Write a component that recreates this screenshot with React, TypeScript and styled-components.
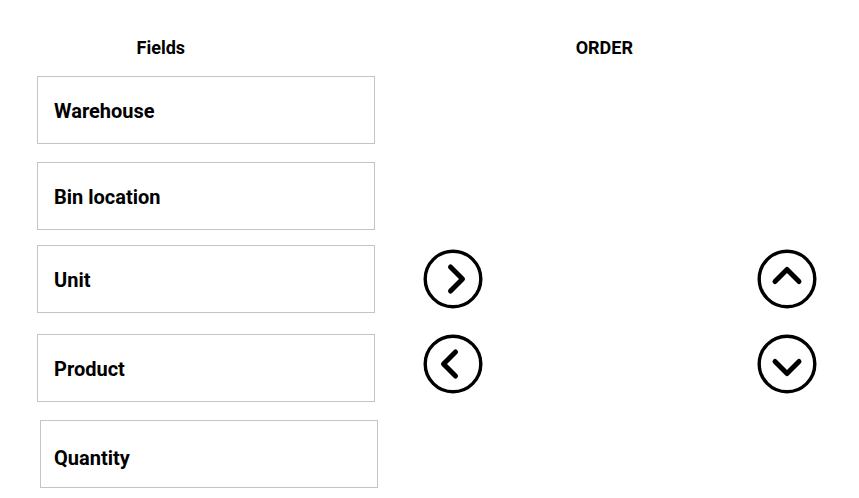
import { createGlobalStyle } from "styled-components";
import styled from "styled-components";

const GlobalStyle = createGlobalStyle`
  body {
    margin: 0;
    background: #fff;
    font-family: Roboto, "Liberation Sans", sans-serif;
    color: #000;
  }
`;

// gap above each box, horizontal nudge, and how far the label sits below centre
const fields = [
  { name: "Warehouse", gap: 0, shift: 0, drop: 1 },
  { name: "Bin location", gap: 18, shift: 0, drop: 1 },
  { name: "Unit", gap: 15, shift: 0, drop: 1 },
  { name: "Product", gap: 21, shift: 0, drop: 1 },
  { name: "Quantity", gap: 18, shift: 3, drop: 4 },
];

const CircleArrow = ({ dir }: { dir: "right" | "left" | "up" | "down" }) => {
  const rot = { right: 0, down: 90, left: 180, up: 270 }[dir];
  return (
    <svg width="60" height="60" viewBox="0 0 60 60">
      <circle cx="30" cy="30" r="27.8" fill="none" stroke="#000" strokeWidth="3.4" />
      <path
        d="M27.5 18 L39.5 30 L27.5 42"
        fill="none"
        stroke="#000"
        strokeWidth="5"
        strokeLinecap="round"
        strokeLinejoin="round"
        transform={`rotate(${rot} 30 30)`}
      />
    </svg>
  );
};

const App = () => {
  return (
    <Page>
      <GlobalStyle />
      <Header>
        <FieldsTitle>Fields</FieldsTitle>
        <OrderTitle>ORDER</OrderTitle>
      </Header>
      <Main>
        <FieldList>
          {fields.map((f) => (
            <FieldBox key={f.name} $gap={f.gap} $shift={f.shift} $drop={f.drop}>
              {f.name}
            </FieldBox>
          ))}
        </FieldList>
        <ArrowColumn $left={48}>
          <ArrowButton aria-label="Add">
            <CircleArrow dir="right" />
          </ArrowButton>
          <ArrowButton aria-label="Remove">
            <CircleArrow dir="left" />
          </ArrowButton>
        </ArrowColumn>
        <ArrowColumn $left={274}>
          <ArrowButton aria-label="Move up">
            <CircleArrow dir="up" />
          </ArrowButton>
          <ArrowButton aria-label="Move down">
            <CircleArrow dir="down" />
          </ArrowButton>
        </ArrowColumn>
      </Main>
    </Page>
  );
};
export default App;

const Page = styled.div`
  width: 859px;
  height: 498px;
  overflow: hidden;
`;
const Header = styled.div`
  display: flex;
  align-items: center;
  padding-top: 37px;
  height: 20px;
  font-size: 18px;
  font-weight: 700;
`;
const FieldsTitle = styled.div`
  width: 322px;
  text-align: center;
`;
const OrderTitle = styled.div`
  width: 510px;
  margin-left: 28px;
  text-align: center;
`;
const Main = styled.div`
  display: flex;
  align-items: flex-start;
  padding-top: 19px;
`;
const FieldList = styled.div`
  display: flex;
  flex-direction: column;
  align-items: flex-start;
  margin-left: 37px;
  width: 338px;
`;
const FieldBox = styled.div<{ $gap: number; $shift: number; $drop: number }>`
  box-sizing: border-box;
  width: 338px;
  height: 68px;
  flex-shrink: 0;
  margin-top: ${({ $gap }) => $gap}px;
  margin-left: ${({ $shift }) => $shift}px;
  border: 1px solid #c4c4c4;
  padding-left: ${({ $shift }) => 16 - $shift}px;
  padding-top: ${({ $drop }) => $drop * 2}px;
  display: flex;
  align-items: center;
  font-size: 20px;
  font-weight: 700;
`;
const ArrowColumn = styled.div<{ $left: number }>`
  display: flex;
  flex-direction: column;
  gap: 25px;
  margin-left: ${({ $left }) => $left}px;
  padding-top: 173px;
`;
const ArrowButton = styled.button`
  width: 60px;
  height: 60px;
  padding: 0;
  border: none;
  background: none;
  cursor: pointer;
  display: block;
`;
